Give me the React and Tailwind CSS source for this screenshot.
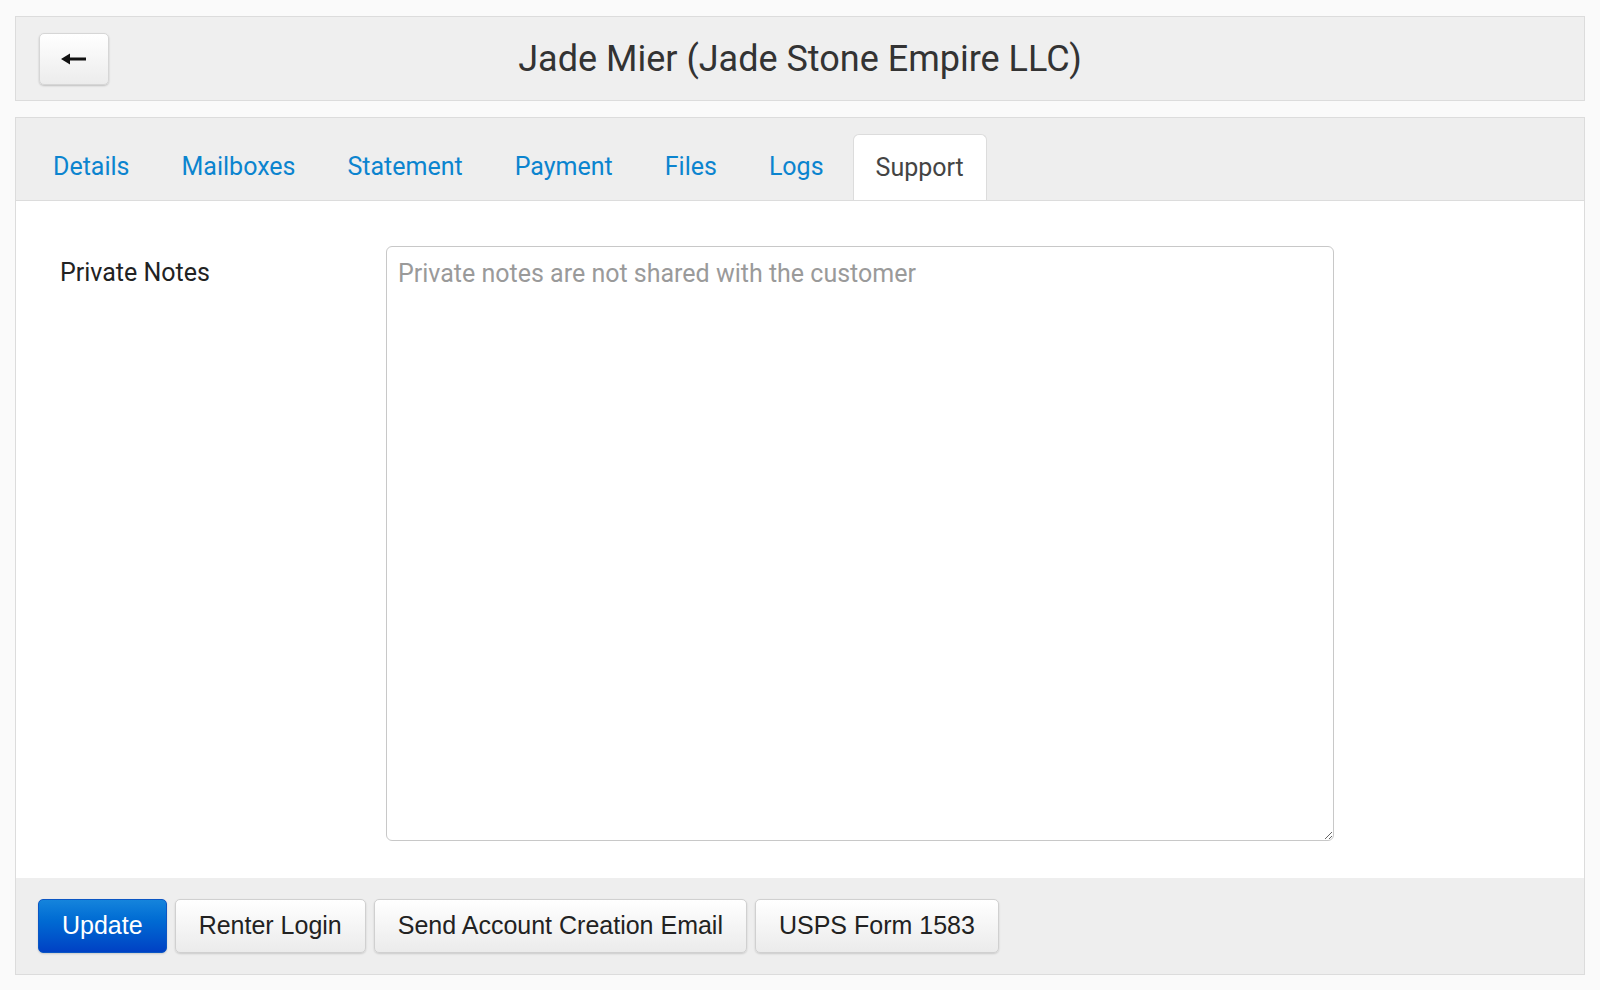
import { useState } from 'react';

const tabs = ['Details', 'Mailboxes', 'Statement', 'Payment', 'Files', 'Logs', 'Support'];

const btn =
  'h-[54px] px-[23px] rounded-[5px] border text-[25px] shadow-[0_1px_2px_rgba(0,0,0,0.15)] font-["Liberation_Sans",Arial,sans-serif]';

export default function App() {
  const [active, setActive] = useState('Support');
  const [notes, setNotes] = useState('');

  return (
    <div className="min-h-screen bg-[#fafafa] px-[15px] pt-[16px] pb-[14px] font-['Roboto',sans-serif]">
      {/* Header */}
      <div className="h-[85px] border border-[#dcdcdc] bg-[#efefef] grid grid-cols-[1fr_auto_1fr] items-center px-[23px]">
        <div>
          <button className="w-[70px] h-[52px] rounded-[5px] border border-[#d6d6d6] bg-gradient-to-b from-white to-[#ececec] shadow-[0_1px_2px_rgba(0,0,0,0.2)] flex items-center justify-center">
            <svg width="26" height="12" viewBox="0 0 26 12">
              <path d="M0 6 L9 0.5 L9 4.5 L25 4.5 L25 7.5 L9 7.5 L9 11.5 Z" fill="#111" />
            </svg>
          </button>
        </div>
        <h1 className="text-[36px] text-[#333] leading-none">Jade Mier (Jade Stone Empire LLC)</h1>
        <div />
      </div>

      {/* Card */}
      <div className="mt-[16px] border border-[#dcdcdc]">
        <div className="bg-[#eeeeee] border-b border-[#dcdcdc] pt-[16px] px-[14px] flex gap-[6px]">
          {tabs.map((t) => (
            <button
              key={t}
              onClick={() => setActive(t)}
              className={
                t === active
                  ? 'h-[66px] px-[22px] text-[25px] text-[#444] bg-white border border-b-0 border-[#dcdcdc] rounded-t-[6px] -mb-px'
                  : 'h-[66px] px-[22px] text-[25px] text-[#0b84cf] border border-transparent'
              }
            >
              {t}
            </button>
          ))}
        </div>

        <div className="bg-white flex pt-[45px] pb-[37px] pl-[44px]">
          <label className="w-[326px] mt-[12px] text-[25px] leading-[30px] text-[#222]">Private Notes</label>
          <textarea
            value={notes}
            onChange={(e) => setNotes(e.target.value)}
            placeholder="Private notes are not shared with the customer"
            className="w-[948px] h-[595px] border border-[#c8c8c8] rounded-[6px] px-[11px] py-[10px] text-[25px] leading-[34px] text-[#333] placeholder:text-[#9a9a9a] outline-none resize"
          />
        </div>

        <div className="bg-[#eeeeee] px-[22px] py-[21px] flex gap-[8px]">
          <button className={`${btn} border-[#0b56c4] text-white bg-gradient-to-b from-[#1584dc] to-[#0040c4]`}>
            Update
          </button>
          <button className={`${btn} border-[#d0d0d0] text-[#222] bg-gradient-to-b from-white to-[#ebebeb]`}>
            Renter Login
          </button>
          <button className={`${btn} border-[#d0d0d0] text-[#222] bg-gradient-to-b from-white to-[#ebebeb]`}>
            Send Account Creation Email
          </button>
          <button className={`${btn} border-[#d0d0d0] text-[#222] bg-gradient-to-b from-white to-[#ebebeb]`}>
            USPS Form 1583
          </button>
        </div>
      </div>
    </div>
  );
}
